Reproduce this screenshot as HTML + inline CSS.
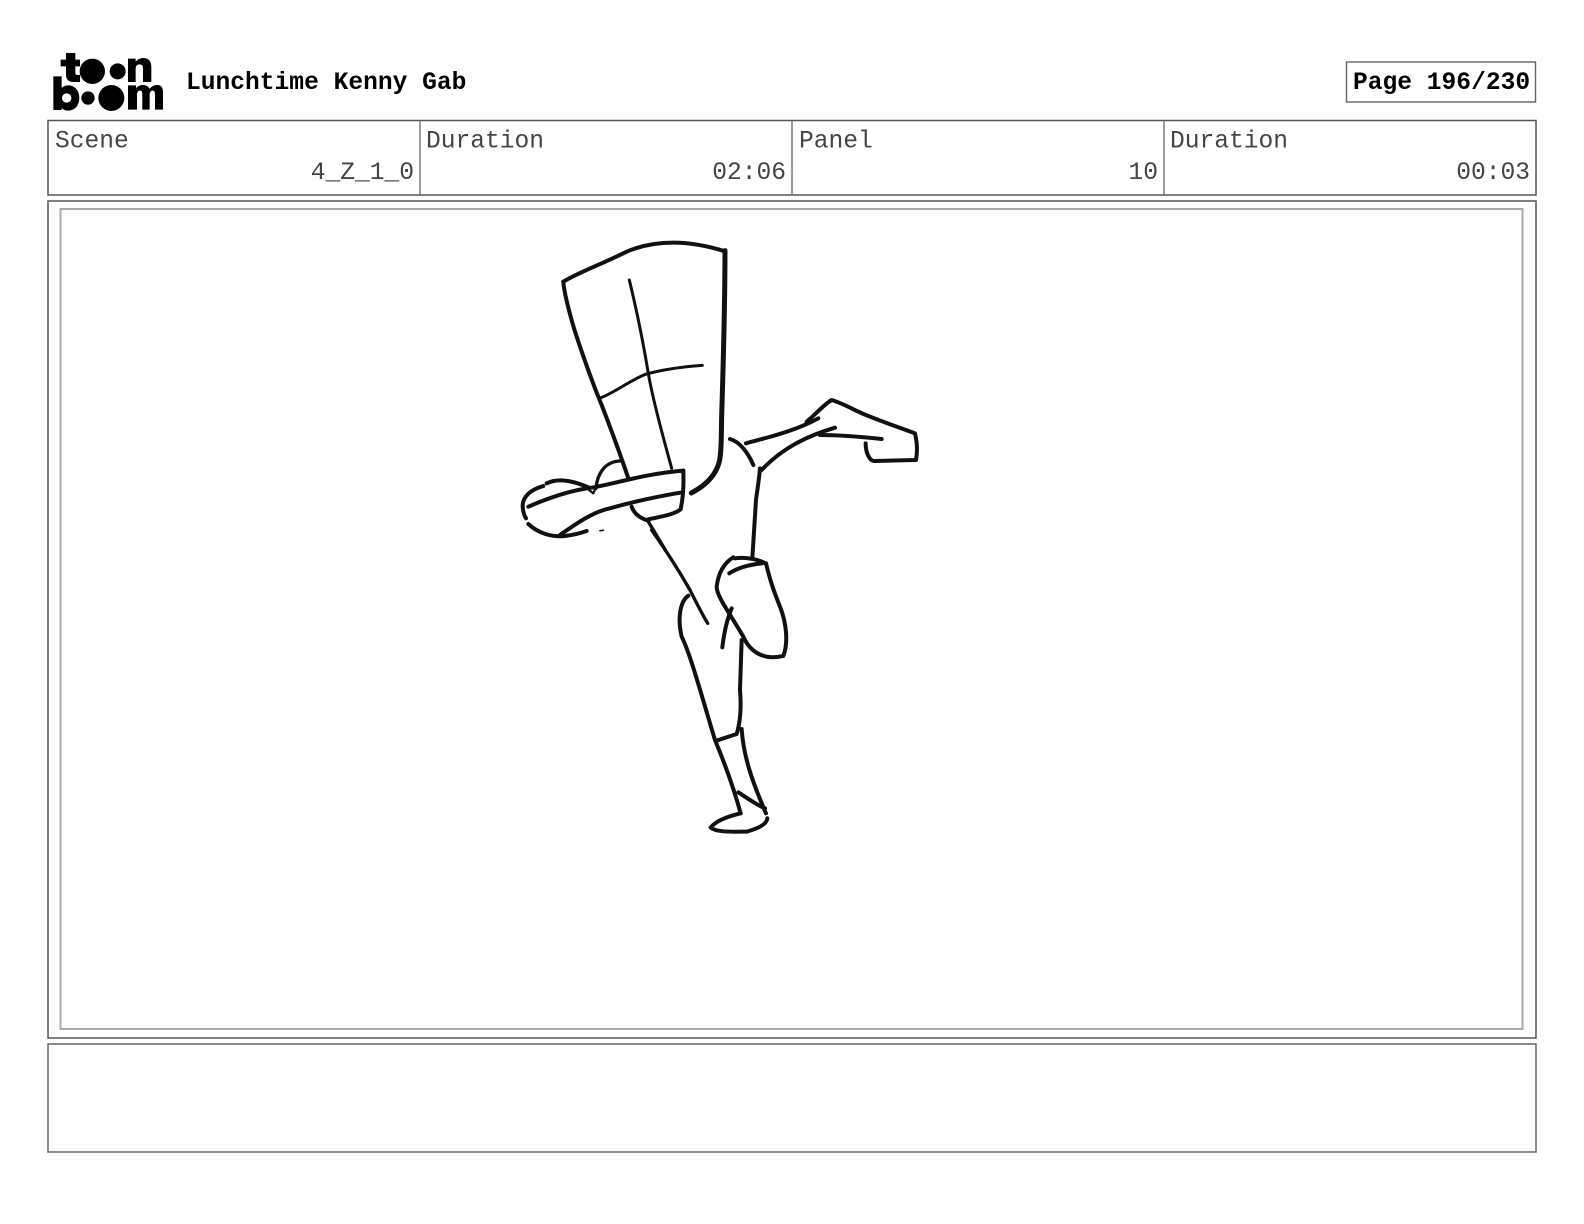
<!DOCTYPE html>
<html><head><meta charset="utf-8"><title>Lunchtime Kenny Gab</title>
<style>html,body{margin:0;padding:0;background:#fff}svg{display:block}
text{font-family:"Liberation Mono",monospace;font-size:24.6px}
.b{font-weight:bold;fill:#000}.r{fill:#444;text-anchor:start}.e{fill:#444;text-anchor:end}
.s path{fill:none;stroke:#111;stroke-width:12;stroke-linecap:round;stroke-linejoin:round}
</style></head><body>
<svg width="1584" height="1224" viewBox="0 0 1584 1224" xmlns="http://www.w3.org/2000/svg">
<rect width="1584" height="1224" fill="#fff"/>
<g transform="translate(48,48) scale(.3333)" fill="#000">
<path d="M54 15h28v20h14v20H82v20c0 4 3 6 7 6h7v21H76c-15 0-22-8-22-22V55H38V35h16z"/>
<circle cx="133" cy="70" r="38"/><circle cx="209" cy="70" r="24"/>
<path d="M240 32h23v9c6-7 14-11 23-11 16 0 24 10 24 27v45h-25V61c0-8-3-12-10-12-8 0-12 5-12 14v39h-23z"/>
<path fill-rule="evenodd" d="M16 85h25v35c5-5 12-8 20-8 20 0 33 16 33 38s-14 38-34 38c-8 0-14-3-19-8v6H16zM56 136a14 14 0 1 0 .1 0z"/>
<circle cx="120" cy="150" r="20"/><circle cx="190" cy="150" r="39"/>
<path d="M240 112h24v9c5-6 12-10 21-10 9 0 16 4 20 11 6-7 14-11 23-11 11 0 17 8 17 20v54h-24v-45c0-8-2-12-7-12-6 0-9 5-9 13v44h-22v-45c0-8-2-12-7-12-6 0-9 5-9 13v44h-27z"/>
</g>
<text class="b" x="186" y="89">Lunchtime Kenny Gab</text>
<rect x="1346.5" y="62" width="189" height="40" fill="none" stroke="#666" stroke-width="1.4"/>
<text class="b" x="1353" y="89">Page 196/230</text>
<rect x="48" y="120.5" width="1488" height="74.5" fill="none" stroke="#555" stroke-width="1.5"/>
<path d="M420 120v75M792 120v75M1164 120v75" stroke="#666" stroke-width="1.3"/>
<text class="r" x="55" y="147.5">Scene</text><text class="r" x="426" y="147.5">Duration</text><text class="r" x="799" y="147.5">Panel</text><text class="r" x="1170" y="147.5">Duration</text>
<text class="e" x="414" y="179">4_Z_1_0</text><text class="e" x="786" y="179">02:06</text><text class="e" x="1158" y="179">10</text><text class="e" x="1530" y="179">00:03</text>
<rect x="48" y="201" width="1488" height="837" fill="none" stroke="#555" stroke-width="1.5"/>
<rect x="60.5" y="209" width="1462" height="820" fill="none" stroke="#aaa" stroke-width="2"/>
<rect x="48" y="1044" width="1488" height="108" fill="none" stroke="#666" stroke-width="1.5"/>
<g class="s" transform="translate(500,230) scale(.3333)">
<path d="M190 155C240 125 300 105 380 65C420 48 470 38 520 38C580 38 630 50 675 64"/>
<path d="M190 155C192 190 215 275 230 320C255 395 280 465 305 525C330 590 360 670 385 745"/>
<path style="stroke-width:15" d="M675 62C675 200 670 400 665 560C664 620 664 670 658 695C648 735 620 765 574 789"/>
<path style="stroke-width:9" d="M388 150C410 240 430 340 445 430C460 520 495 640 515 715"/>
<path style="stroke-width:9" d="M303 503C340 490 400 445 440 432C490 418 550 410 607 406"/>
</g>
<g class="s" transform="translate(510,450) scale(.3333)">
<path d="M55 170C120 142 190 120 245 113C320 100 400 72 520 62"/>
<path d="M520 62C522 110 518 150 512 178C490 195 450 200 415 208"/>
<path d="M150 255C200 220 250 185 300 175C370 155 440 140 510 128"/>
<path d="M100 108C60 120 40 140 38 165C38 180 42 195 48 205"/>
<path d="M55 222C85 250 125 262 165 258C190 255 210 250 230 243"/>
<path d="M110 100C140 85 180 88 235 112"/>
<path style="stroke-width:10" d="M258 115C262 70 285 35 330 33"/>
<path d="M365 170C372 190 390 205 415 212"/>
<path d="M415 215L465 298" style="stroke-width:10"/>
<path style="stroke-width:5" d="M270 242L280 241"/>
<path style="stroke-width:7" d="M237 120L250 130L255 118"/>
</g>
<g class="s" transform="translate(720,390) scale(.3333)">
<path d="M30 147C60 155 85 190 100 225"/>
<path d="M78 160C150 140 220 125 295 85"/>
<path d="M260 95C285 75 310 45 335 30C370 40 410 65 450 80C500 100 545 115 585 130C592 160 592 190 588 210L465 213C450 215 437 190 437 160"/>
<path d="M345 113C270 135 190 170 125 240"/>
<path d="M300 135C360 135 420 140 485 147"/>
<path d="M120 235C116 280 111 305 108 330"/>
</g>
<g class="s" transform="translate(620,530) scale(.3333)">
<path style="stroke-width:10" d="M95 0C130 50 170 110 210 180C230 220 245 250 263 280"/>
<path d="M408 -90L397 85"/>
<path d="M205 197C180 215 172 265 185 320C210 370 240 480 285 630C310 690 340 770 362 850"/>
<path d="M362 850C320 860 285 875 272 893C290 908 340 905 380 905C410 897 440 885 442 865"/>
<path d="M365 597C370 670 390 740 438 850"/>
<path d="M355 787C375 800 410 825 435 835"/>
<path d="M290 632L350 612C360 580 365 540 360 480L365 330"/>
<path d="M340 82C310 100 295 130 290 170C290 200 330 250 370 320C390 365 430 392 490 378C505 340 500 280 480 230C460 180 450 150 438 100"/>
<path d="M345 85C380 80 420 90 435 100"/>
<path d="M328 130C350 115 380 105 425 100"/>
<path d="M335 235C320 270 312 310 307 352"/>
</g>
</svg>
</body></html>
